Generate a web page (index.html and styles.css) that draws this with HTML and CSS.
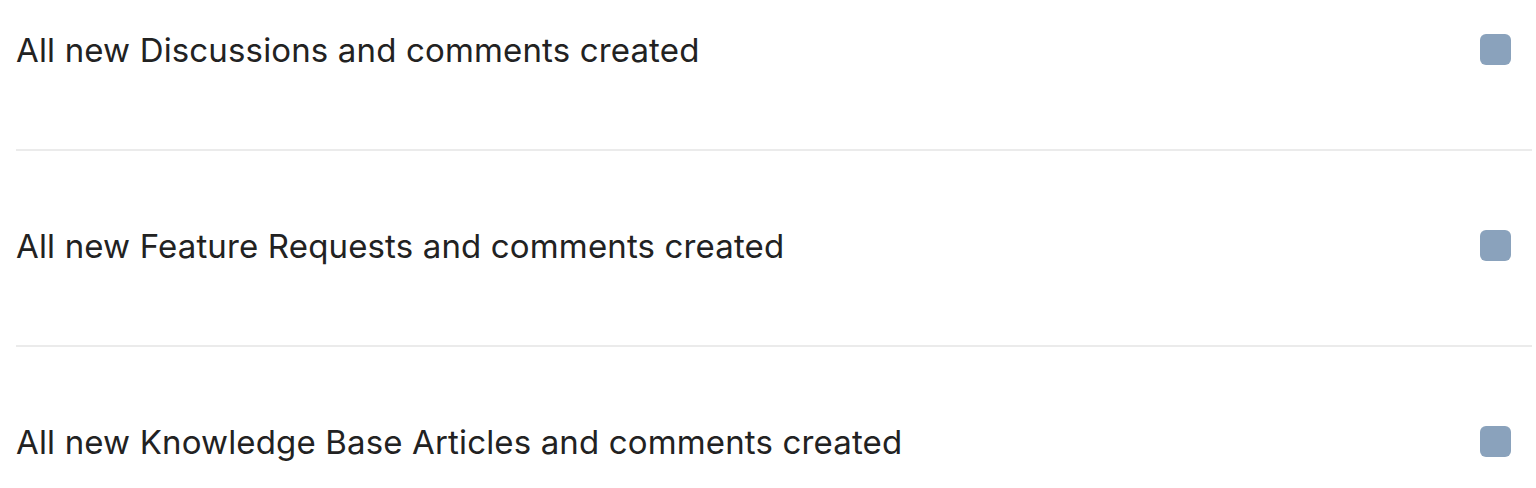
FILE: index.html
```html
<!DOCTYPE html>
<html lang="en">
<head>
<meta charset="utf-8">
<title>Notifications</title>
<link rel="stylesheet" href="styles.css">
</head>
<body>
<div class="list">
  <div class="row">
    <span class="label">All new Discussions and comments created</span>
    <span class="check"></span>
  </div>
  <div class="sep"></div>
  <div class="row">
    <span class="label">All new Feature Requests and comments created</span>
    <span class="check"></span>
  </div>
  <div class="sep"></div>
  <div class="row">
    <span class="label">All new Knowledge Base Articles and comments created</span>
    <span class="check"></span>
  </div>
</div>
</body>
</html>
```
FILE: styles.css
```css
html, body {
  margin: 0;
  padding: 0;
  background: #ffffff;
}
.list {
  width: 1516px;
  padding-left: 16px;
  font-family: "Inter", "Liberation Sans", sans-serif;
  color: #222222;
}
.row {
  display: flex;
  align-items: center;
  justify-content: space-between;
  height: 99px;
}
.label {
  font-size: 33px;
  line-height: 40px;
  letter-spacing: 0.15px;
}
.check {
  width: 31px;
  height: 31px;
  border-radius: 6px;
  background: #8aa2bc;
  margin-right: 21px;
}
.sep {
  height: 2px;
  background: #ebebeb;
  margin: 50px 0 45px;
}
```
